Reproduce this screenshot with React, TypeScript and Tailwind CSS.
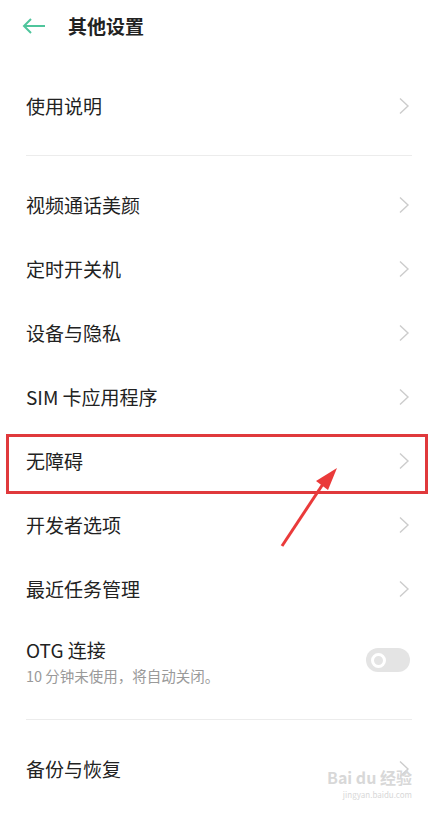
const font = { fontFamily: '"Noto Sans CJK SC", "Noto Sans", sans-serif' }

function Chevron() {
  return (
    <svg width="12" height="18" viewBox="0 0 12 18" className="shrink-0">
      <path d="M2 1.5 L10 9 L2 16.5" fill="none" stroke="#cccccc" strokeWidth="1.4" />
    </svg>
  )
}

function Row({ label }: { label: string }) {
  return (
    <div className="flex h-[64px] items-center justify-between pl-[26px] pr-[28px]">
      <span className="text-[19px] text-[#222]">{label}</span>
      <Chevron />
    </div>
  )
}

export default function App() {
  const items = ["视频通话美颜", "定时开关机", "设备与隐私", "SIM 卡应用程序", "无障碍", "开发者选项", "最近任务管理"]
  return (
    <div className="relative h-[814px] w-[438px] overflow-hidden bg-white" style={font}>
      {/* Header */}
      <div className="flex h-[52px] items-center pl-[22px]">
        <svg width="24" height="16" viewBox="0 0 24 16">
          <path d="M23 8 H2 M9 1 L2 8 L9 15" fill="none" stroke="#4fc59c" strokeWidth="2" />
        </svg>
        <span className="ml-[22px] text-[19px] font-bold text-[#222]">其他设置</span>
      </div>

      <div className="pt-[22px]">
        <Row label="使用说明" />
        <div className="mx-[26px] my-[17px] h-px bg-[#ececec]" />
        {items.map((l) => (
          <Row key={l} label={l} />
        ))}

        {/* OTG */}
        <div className="flex h-[80px] items-start justify-between pl-[26px] pr-[28px] pt-[15px]">
          <div className="flex flex-col">
            <span className="text-[19px] leading-[28px] text-[#222]">OTG 连接</span>
            <span className="mt-[1px] text-[14.5px] text-[#9a9a9a]">10 分钟未使用，将自动关闭。</span>
          </div>
          <div className="mt-[12px] flex h-[24px] w-[44px] items-center rounded-full bg-[#e4e4e4] pl-[5px]">
            <div className="h-[15px] w-[15px] rounded-full border-[3px] border-white bg-[#e4e4e4]" />
          </div>
        </div>
        <div className="mx-[26px] mt-[18px] mb-[17px] h-px bg-[#ececec]" />
        <Row label="备份与恢复" />
      </div>

      {/* highlight overlay */}
      <div className="absolute left-[6px] top-[434px] h-[60px] w-[422px] border-[3px] border-[#e0393c]" />
      <svg className="absolute left-0 top-0" width="438" height="814" viewBox="0 0 438 814">
        <path d="M282 546 L323 484" stroke="#ea3a3a" strokeWidth="3" />
        <path d="M337 468 L316 481 L328 490 Z" fill="#ea3a3a" />
      </svg>

      <div className="absolute right-[26px] top-[768px] flex flex-col items-end text-[#d8d8d8]">
        <span className="text-[16px] font-bold leading-[18px]">Bai du 经验</span>
        <span className="mt-[4px] text-[8px] leading-[10px]">jingyan.baidu.com</span>
      </div>
    </div>
  )
}
